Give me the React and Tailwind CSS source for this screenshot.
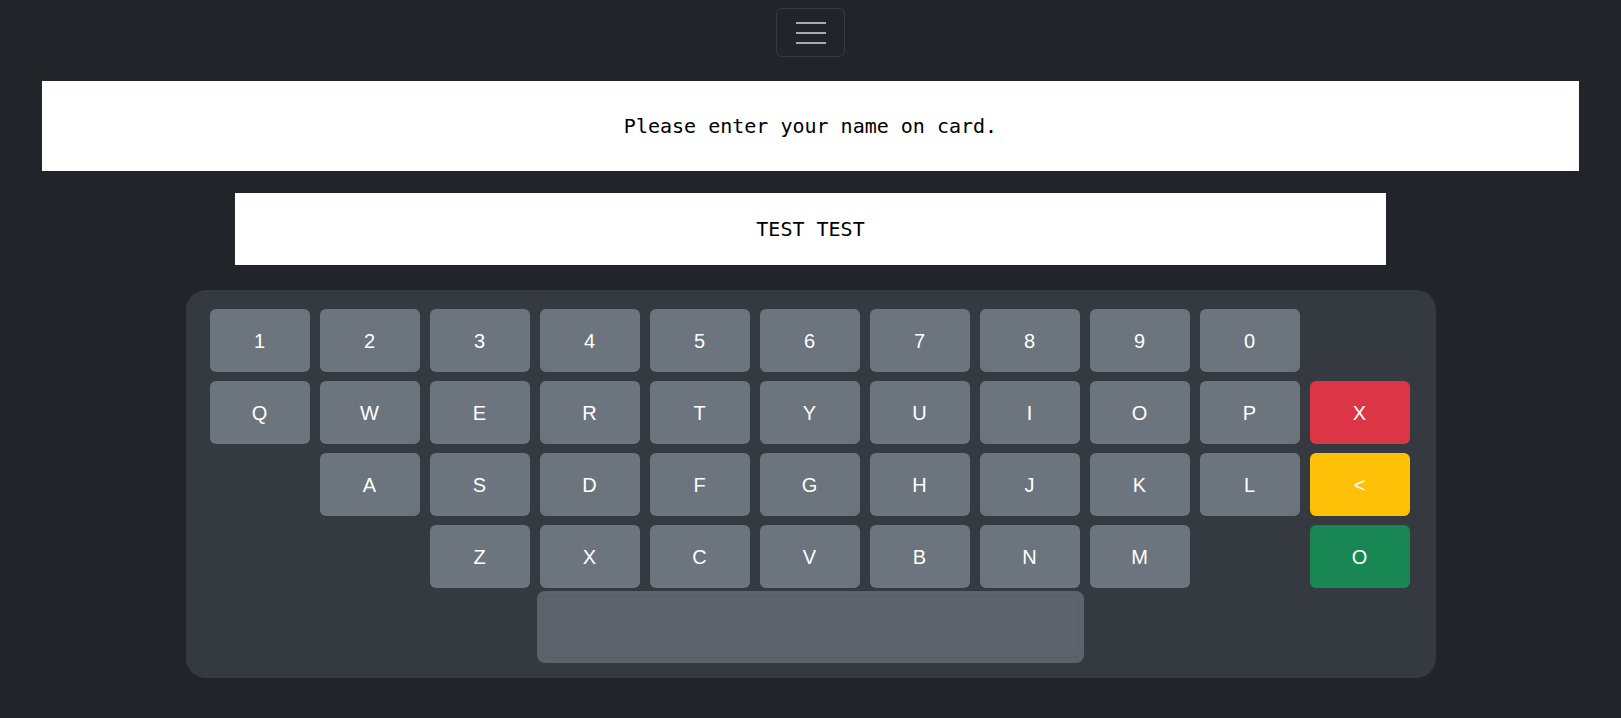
const rows = [
  ['1', '2', '3', '4', '5', '6', '7', '8', '9', '0'],
  ['Q', 'W', 'E', 'R', 'T', 'Y', 'U', 'I', 'O', 'P'],
  ['A', 'S', 'D', 'F', 'G', 'H', 'J', 'K', 'L'],
  ['Z', 'X', 'C', 'V', 'B', 'N', 'M'],
];

// column start of each row inside the 11-column grid
const rowStart = [1, 1, 2, 3];

const colClass = [
  '',
  'col-start-1',
  'col-start-2',
  'col-start-3',
];

function Key({ label, className = '' }) {
  return (
    <button
      type="button"
      className={`h-[63px] rounded-[6px] text-[20px] text-white flex items-center justify-center ${className}`}
      style={{ fontFamily: '"Liberation Sans", Arial, sans-serif' }}
    >
      {label}
    </button>
  );
}

export default function App() {
  return (
    <div className="min-h-screen bg-[#212529] flex flex-col items-center pt-[8px]">
      {/* Navbar toggler */}
      <button
        type="button"
        className="w-[69px] h-[49px] rounded-[6px] border border-white/10 flex flex-col items-center justify-center gap-[8px]"
        aria-label="Toggle navigation"
      >
        <span className="block w-[30px] h-[2px] bg-[#a9abad]" />
        <span className="block w-[30px] h-[2px] bg-[#a9abad]" />
        <span className="block w-[30px] h-[2px] bg-[#a9abad]" />
      </button>

      {/* Prompt */}
      <div className="self-stretch mx-[42px] mt-[24px] h-[90px] bg-white flex items-center justify-center">
        <p
          className="text-[20px] text-black"
          style={{ fontFamily: '"DejaVu Sans Mono", "Liberation Mono", monospace' }}
        >
          Please enter your name on card.
        </p>
      </div>

      {/* Input */}
      <div className="w-[1151px] mt-[22px] h-[72px] bg-white flex items-center justify-center">
        <p
          className="text-[20px] text-black"
          style={{ fontFamily: '"DejaVu Sans Mono", "Liberation Mono", monospace' }}
        >
          TEST TEST
        </p>
      </div>

      {/* Keyboard */}
      <div className="w-[1250px] mt-[25px] rounded-[20px] bg-[#343a40] px-[24px] pt-[19px] pb-[14px]">
        <div className="grid grid-cols-[repeat(11,100px)] auto-rows-[63px] gap-x-[10px] gap-y-[9px]">
          {rows.map((row, r) =>
            row.map((k, i) => (
              <Key
                key={`${r}-${k}`}
                label={k}
                className={`bg-[#6c757d] ${i === 0 ? colClass[rowStart[r]] : ''}`}
              />
            ))
          )}
          <Key label="X" className="bg-[#dc3545] col-start-11 row-start-2" />
          <Key label="<" className="bg-[#ffc107] col-start-11 row-start-3" />
          <Key label="O" className="bg-[#198754] col-start-11 row-start-4" />
        </div>

        {/* Space bar */}
        <div className="mt-[3px] pl-[327px]">
          <button
            type="button"
            className="w-[547px] h-[72px] rounded-[8px] bg-[#5c636a] p-[5px]"
            aria-label="Space"
          >
            <span className="block w-full h-full rounded-[5px] border border-[#565d64]" />
          </button>
        </div>
      </div>
    </div>
  );
}
